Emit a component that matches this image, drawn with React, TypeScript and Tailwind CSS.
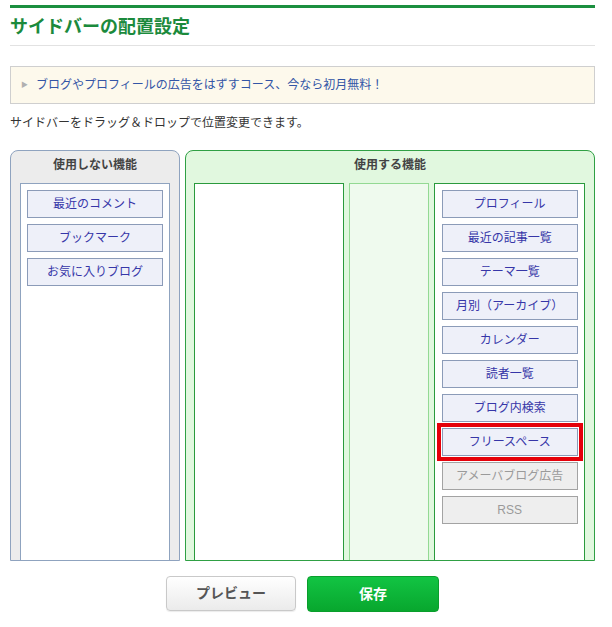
import React from "react";

const unused = ["最近のコメント", "ブックマーク", "お気に入りブログ"];
const used: { label: string; disabled?: boolean; highlight?: boolean }[] = [
  { label: "プロフィール" },
  { label: "最近の記事一覧" },
  { label: "テーマ一覧" },
  { label: "月別（アーカイブ）" },
  { label: "カレンダー" },
  { label: "読者一覧" },
  { label: "ブログ内検索" },
  { label: "フリースペース", highlight: true },
  { label: "アメーバブログ広告", disabled: true },
  { label: "RSS", disabled: true },
];

function Item({ label, disabled, highlight }: { label: string; disabled?: boolean; highlight?: boolean }) {
  const base =
    "h-[28px] w-[136px] flex items-center justify-center text-[12px] border";
  const style = disabled
    ? "bg-[#eeeeee] border-[#a3a3a3] text-[#9a9a9a]"
    : "bg-[#eef0f9] border-[#8b9bb8] text-[#3636a8]";
  const hl = highlight ? " outline-4 outline-[#e5000a] outline-offset-1" : "";
  return <div className={`${base} ${style}${hl}`}>{label}</div>;
}

export default function App() {
  return (
    <div
      className="w-[612px] h-[627px] bg-white text-[#333]"
      style={{ fontFamily: "'Liberation Sans', 'Noto Sans CJK JP', sans-serif" }}
    >
      <div className="ml-[10px] w-[585px] pt-[5px]">
        <div className="h-[3px] bg-[#1b8f3f]" />
        <div className="h-[38px] flex items-center border-b border-[#e2e2e2]">
          <h1 className="text-[18px] font-bold text-[#1b8a3c] leading-none">サイドバーの配置設定</h1>
        </div>
        <div className="mt-[20px] h-[38px] border border-[#cfcfcf] bg-[#fdf9ec] flex items-center pl-[10px] text-[12px] text-[#3355a6]">
          <span className="text-[#b0b0b0] text-[7px] mr-[8px]">▶</span>
          <span>ブログやプロフィールの広告をはずすコース、今なら初月無料！</span>
        </div>
        <div className="h-[38px] flex items-center text-[12px] text-[#333]">
          サイドバーをドラッグ＆ドロップで位置変更できます。
        </div>
        <div className="mt-[8px] flex gap-[5px] h-[411px]">
          {/* unused panel */}
          <div className="w-[170px] rounded-t-[8px] border border-[#8fa3bf] bg-[#ececec] flex flex-col">
            <div className="h-[32px] pb-[5px] flex items-center justify-center text-[12px] font-bold text-[#444]">
              使用しない機能
            </div>
            <div className="flex-1 px-[9px] flex">
              <div className="flex-1 border-x border-t border-[#8fa3bf] bg-white flex flex-col items-center gap-[6px] pt-[6px]">
                {unused.map((u) => (
                  <Item key={u} label={u} />
                ))}
              </div>
            </div>
          </div>
          {/* used panel */}
          <div className="w-[410px] rounded-t-[8px] border border-[#2fa044] bg-[#e1f8df] flex flex-col">
            <div className="h-[32px] pb-[5px] flex items-center justify-center text-[12px] font-bold text-[#444]">
              使用する機能
            </div>
            <div className="flex-1 pl-[8px] pr-[9px] flex gap-[5px]">
              <div className="w-[150px] border-x border-t border-[#2a9a3d] bg-white" />
              <div className="w-[81px] border-x border-t border-[#93d993] bg-[#effaee]" />
              <div className="w-[151px] border-x border-t border-[#2a9a3d] bg-white flex flex-col items-center gap-[6px] pt-[6px]">
                {used.map((u) => (
                  <Item key={u.label} label={u.label} disabled={u.disabled} highlight={u.highlight} />
                ))}
              </div>
            </div>
          </div>
        </div>
        <div className="mt-[15px] flex justify-center gap-[11px]">
          <button className="w-[130px] h-[35px] rounded-[4px] border border-[#c9c9c9] bg-gradient-to-b from-white to-[#ebebeb] text-[14px] font-bold text-[#555] shadow-[0_1px_1px_rgba(0,0,0,0.08)]">
            プレビュー
          </button>
          <button className="w-[132px] h-[36px] rounded-[4px] border border-[#0a9e2c] bg-gradient-to-b from-[#12c443] to-[#08a72e] text-[14px] font-bold text-white">
            保存
          </button>
        </div>
      </div>
    </div>
  );
}
